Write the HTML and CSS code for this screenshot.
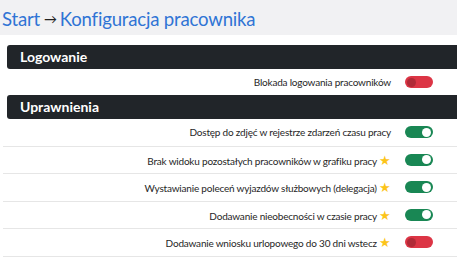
FILE: index.html
```
<!DOCTYPE html>
<html lang="pl">
<head>
<meta charset="utf-8">
<link rel="stylesheet" href="styles.css">
</head>
<body>
<div class="topbar">
  <h1 class="crumbs"><span class="link">Start</span><span class="arrow">&#8594;</span><span class="link">Konfiguracja pracownika</span></h1>
</div>
<main class="content">
  <section class="section">
    <h2 class="section-title">Logowanie</h2>
    <div class="row row-plain">
      <span class="label">Blokada logowania pracowników</span>
      <span class="toggle off"><span class="knob"></span></span>
    </div>
  </section>
  <section class="section">
    <h2 class="section-title">Uprawnienia</h2>
    <div class="row">
      <span class="label">Dostęp do zdjęć w rejestrze zdarzeń czasu pracy</span>
      <span class="toggle on"><span class="knob"></span></span>
    </div>
    <div class="row">
      <span class="label">Brak widoku pozostałych pracowników w grafiku pracy <span class="star">&#9733;</span></span>
      <span class="toggle on"><span class="knob"></span></span>
    </div>
    <div class="row">
      <span class="label">Wystawianie poleceń wyjazdów służbowych (delegacja) <span class="star">&#9733;</span></span>
      <span class="toggle on"><span class="knob"></span></span>
    </div>
    <div class="row">
      <span class="label">Dodawanie nieobecności w czasie pracy <span class="star">&#9733;</span></span>
      <span class="toggle on"><span class="knob"></span></span>
    </div>
    <div class="row">
      <span class="label">Dodawanie wniosku urlopowego do 30 dni wstecz <span class="star">&#9733;</span></span>
      <span class="toggle off"><span class="knob"></span></span>
    </div>
  </section>
</main>
</body>
</html>
```
FILE: styles.css
```
html, body {
  margin: 0;
  padding: 0;
  background: #ffffff;
  overflow: hidden;
}
body {
  font-family: Lato, "Open Sans", sans-serif;
  color: #333333;
}
.topbar {
  background: #f1f1f3;
  height: 35px;
  box-sizing: border-box;
  padding: 6px 0 0 2px;
}
.crumbs {
  margin: 0;
  font-size: 18.6px;
  font-weight: 400;
  line-height: 26px;
  letter-spacing: -0.2px;
  display: flex;
  align-items: center;
}
.crumbs .link {
  color: #2f74d5;
}
.crumbs .arrow {
  color: #222222;
  font-size: 13px;
  margin: 0 3px 0 4px;
}
.content {
  padding-top: 10px;
}
.section-title {
  margin: 0 0 0 7px;
  height: 24px;
  background: #212529;
  color: #ffffff;
  border-radius: 3px 0 0 3px;
  font-size: 14px;
  font-weight: 700;
  line-height: 24px;
  padding-left: 13px;
}
.row {
  margin-left: 3px;
  display: flex;
  justify-content: flex-end;
  align-items: center;
  gap: 14px;
  padding-right: 24px;
  height: 26.5px;
  border-bottom: 1px solid #e6e6e6;
  font-size: 10px;
  letter-spacing: -0.2px;
}
.row-plain {
  border-bottom: none;
  height: 26px;
}
.label {
  color: #262626;
  white-space: nowrap;
}
.star {
  color: #fcc419;
  font-size: 13px;
}
.toggle {
  width: 28px;
  height: 12px;
  border-radius: 6px;
  display: flex;
  align-items: center;
  box-sizing: border-box;
  padding: 0 2px;
}
.toggle .knob {
  width: 9px;
  height: 9px;
  border-radius: 50%;
}
.toggle.on {
  background: #198754;
  justify-content: flex-end;
}
.toggle.on .knob {
  background: #ffffff;
}
.toggle.off {
  background: #dc3545;
  justify-content: flex-start;
}
.toggle.off .knob {
  background: #b02a37;
}
```
